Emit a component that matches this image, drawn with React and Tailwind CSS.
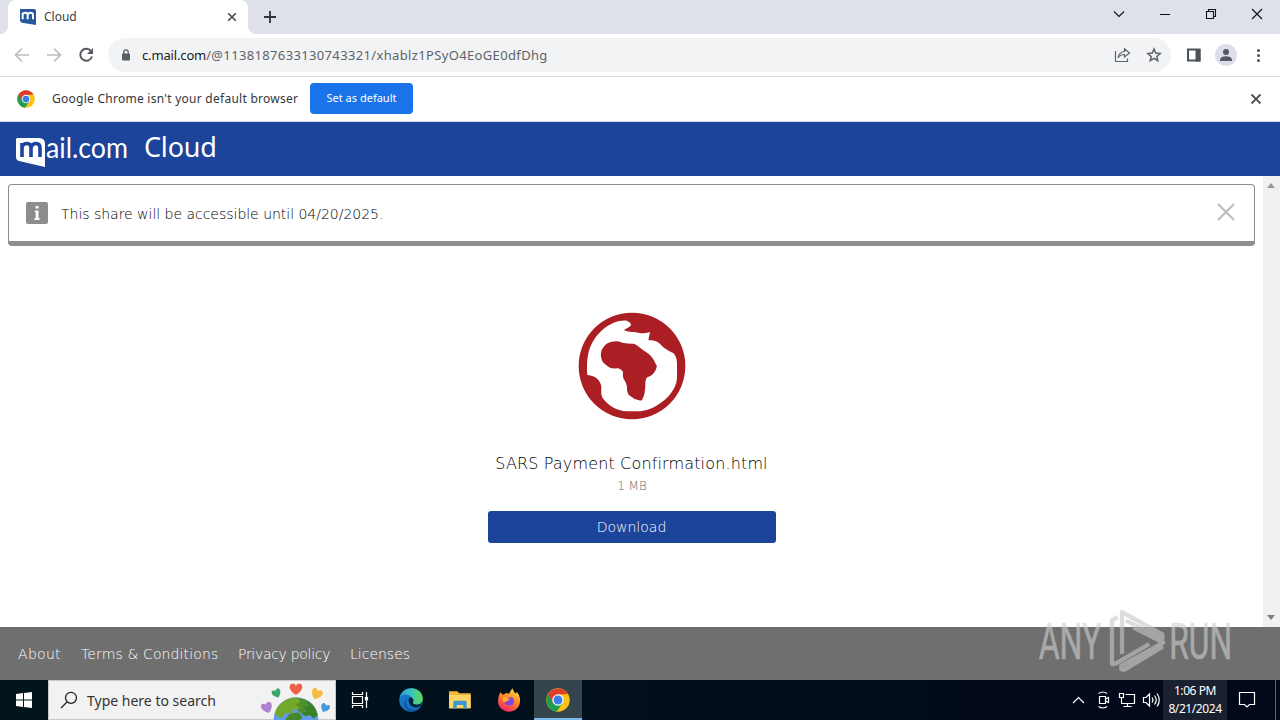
import React from "react";

const ui = "font-['Noto_Sans','Open_Sans',sans-serif]";
const verdana = "font-['DejaVu_Sans',sans-serif] font-extralight";

function ChromeLogo({ className }) {
  return (
    <svg viewBox="0 0 48 48" className={className}>
      <circle cx="24" cy="24" r="23.500" fill="#fbc116" />
      <path d="M24 24 L4 12 A23.500 23.500 0 0 0 21 47.300 L34 29Z" fill="#1e9d4b" />
      <path d="M4 12 A23.500 23.500 0 0 1 44 12 L24 13 L14 29.800Z" fill="#e13b2e" />
      <circle cx="24" cy="24" r="11.500" fill="#fff" />
      <circle cx="24" cy="24" r="9" fill="#3b7fea" />
    </svg>
  );
}

function TabStrip() {
  return (
    <div className="flex h-[34px] bg-[#dee1e9]">
      <div className="w-2 bg-white">
        <div className="h-full rounded-br-lg bg-[#dee1e9]" />
      </div>
      <div className="flex h-[34px] w-[240px] items-center rounded-t-lg bg-white pl-3">
        <svg viewBox="0 0 48 48" className="h-4 w-4 shrink-0">
          <path d="M0 0H42Q48 0 48 6V48L6 41Q0 40 0 34Z" fill="#28589c" />
          <path d="M8 31V11M8 16Q9 11 16 11Q23 11 23 18V31M23 18Q24 11 31 11Q39 11 39 18V31" stroke="#fff" strokeWidth="6" fill="none" />
        </svg>
        <span className={`${ui} ml-2 text-[12px] leading-4 text-[#3c4043]`}>Cloud</span>
        <svg viewBox="0 0 10 10" className="mr-[11px] ml-auto h-[10px] w-[10px]">
          <path d="M1.200 1.200 8.800 8.800M8.800 1.200 1.200 8.800" stroke="#45494d" strokeWidth="1.600" />
        </svg>
      </div>
      <div className="w-2 bg-white">
        <div className="h-full rounded-bl-lg bg-[#dee1e9]" />
      </div>
      <svg viewBox="0 0 14 14" className="mt-[10px] ml-[7px] h-[14px] w-[14px]">
        <path d="M7 1V13M1 7H13" stroke="#303338" strokeWidth="1.800" />
      </svg>
      <svg viewBox="0 0 180 34" className="ml-auto h-[34px] w-[180px]" fill="none" stroke="#111">
        <path d="M14 11.500 19 16.500 24 11.500" strokeWidth="1.100" />
        <path d="M60 14.500H70" strokeWidth="1" />
        <path d="M106.500 11.500H113.500V18.500H106.500ZM108.500 11.500V9.500H115.500V16.500H113.500" strokeWidth="1.100" />
        <path d="M152 9 162 19M162 9 152 19" strokeWidth="1.200" />
      </svg>
    </div>
  );
}

function Toolbar() {
  return (
    <div className="flex h-[43px] items-center border-b border-[#d9dbde] bg-white">
      <svg viewBox="0 0 108 42" className="h-[42px] w-[108px] shrink-0" fill="none">
        <path d="M29 21H16M22 14.500 15.500 21 22 27.500" stroke="#bbbdc0" strokeWidth="1.700" />
        <path d="M47 21H60M54 14.500 60.500 21 54 27.500" stroke="#bbbdc0" strokeWidth="1.700" />
        <path d="M91 17A6 6 0 1 0 92 22.500" stroke="#55595e" strokeWidth="1.900" />
        <path d="M93 14V20H87Z" fill="#55595e" />
      </svg>
      <div className="flex h-[34px] w-[1063px] items-center rounded-full bg-[#f1f3f5]">
        <svg viewBox="0 0 10 12" className="ml-[13px] h-[12px] w-[10px]">
          <rect x="1" y="4.500" width="8" height="7" rx="1" fill="#5a5e63" />
          <path d="M2.800 5V3A2.200 2.200 0 0 1 7.200 3V5" stroke="#5a5e63" strokeWidth="1.300" fill="none" />
        </svg>
        <span className={`${ui} ml-[11px] text-[13px] leading-5 tracking-[0.245px] whitespace-nowrap text-[#5f6368]`}>
          <span className="tracking-[-0.15px] text-[#202124]">c.mail.com</span>
          <span className="tracking-[0.35px]">/@1138187633130743321/xhablz1PSyO4EoGE0dfDhg</span>
        </span>
        <svg viewBox="0 0 60 34" className="ml-auto h-[34px] w-[60px]" fill="none" stroke="#5f6368">
          <path d="M4.500 13V23.500H16.500V20.500" strokeWidth="1.200" />
          <path d="M7 20Q8 14 13.500 13.500V10.800L18.500 15 13.500 19V16.500Q9 16.500 7 20Z" strokeWidth="1.200" />
          <path d="M43 11 44.700 15.100 49.100 15.500 45.800 18.400 46.800 22.700 43 20.400 39.200 22.700 40.200 18.400 36.900 15.500 41.300 15.100Z" strokeWidth="1.500" />
        </svg>
      </div>
      <svg viewBox="0 0 109 42" className="h-[42px] w-[109px] shrink-0">
        <path d="M17 15.500H28.500V26.500H17Z" fill="none" stroke="#4d5257" strokeWidth="2" />
        <rect x="24.500" y="15" width="5" height="12.500" fill="#4d5257" />
        <circle cx="55" cy="21" r="11" fill="#dcdfea" />
        <circle cx="55" cy="18" r="3" fill="#525868" />
        <path d="M49 27V25.500Q50 22.300 55 22.300T61 25.500V27Z" fill="#525868" />
        <g fill="#4d5257">
          <circle cx="87.500" cy="16.500" r="1.500" />
          <circle cx="87.500" cy="21.500" r="1.500" />
          <circle cx="87.500" cy="26.500" r="1.500" />
        </g>
      </svg>
    </div>
  );
}

function InfoBar() {
  return (
    <div className="flex h-[45px] items-center border-b border-[#d5d8e0] bg-white pl-[17px]">
      <ChromeLogo className="h-[18px] w-[18px]" />
      <span className={`${ui} ml-[17px] w-[258px] text-[12px] tracking-[0.26px] whitespace-nowrap text-[#33363a]`}>
        Google Chrome isn't your default browser
      </span>
      <button className={`${ui} mb-[2px] h-[31px] w-[103px] rounded bg-[#1a73e8] text-[11px] text-white`}>Set as default</button>
      <svg viewBox="0 0 12 12" className="mr-[18px] ml-auto h-3 w-3">
        <path d="M1.500 1.500 10.500 10.500M10.500 1.500 1.500 10.500" stroke="#4d5156" strokeWidth="1.800" />
      </svg>
    </div>
  );
}

function SiteHeader() {
  return (
    <header className="flex h-[54px] bg-[#1c449b] pl-4">
      <svg viewBox="0 0 114 54" className="h-[54px] w-[114px] shrink-0 overflow-visible">
        <path d="M0 17Q0 16 2 16H23Q29 16 29 22V45L3 39Q0 38 0 35Z" fill="#fff" />
        <path d="M6 35V21M6 25Q7 21.500 11 21.500Q15 21.500 15 26V35M15 26Q16 21.500 20 21.500Q24 21.500 24 26V35" stroke="#1c449b" strokeWidth="3.600" fill="none" />
        <text x="30" y="36" textLength="82" lengthAdjust="spacingAndGlyphs" fontFamily="Lato, sans-serif" fontSize="28" fill="#fff">ail.com</text>
      </svg>
      <h1 className={`${ui} ml-[14px] text-[27px] leading-[50px] tracking-[-0.2px] text-white`}>Cloud</h1>
    </header>
  );
}

function Globe() {
  return (
    <svg viewBox="0 0 375 375" className="ml-[2px] h-[125px] w-[125px]">
      <circle cx="186" cy="183" r="160" fill="#ab1e23" />
      <path fill="#fff" d="M52 210C48 150 58 112 96 76C123 53 147 45 170 47Q184 52 183 61C178 68 170 70 162 75C180 84 192 79 208 84Q222 87 240 81L235 106C253 105 264 109 276 123C290 137 303 139 312 146Q322 158 321 182V218C320 240 309 261 288 281C274 293 263 300 247 309Q229 317 211 319H170C139 317 117 303 100 282C92 270 94 264 94 246C92 226 77 212 52 210Z" />
      <path fill="#ab1e23" d="M93 155C90 135 104 113 126 110Q143 107 157 113Q177 117 192 116C208 123 213 133 227 140Q247 152 257 176Q263 182 259 190C254 205 244 213 232 217Q226 222 226 236Q226 266 218 281Q216 289 207 286Q191 283 181 273Q173 270 171 254Q172 236 161 222Q157 213 159 202Q154 191 141 190Q119 193 106 178Q95 170 93 155Z" />
    </svg>
  );
}

function Share() {
  return (
    <div className="flex h-[451px] bg-white">
      <main className={`${verdana} flex w-[1263px] flex-col items-center px-2 pt-2`}>
        <div className="flex h-[61.500px] w-[1247px] items-center rounded-[4px] border border-b-[5px] border-[#8e8e8e] pl-[17px]">
          <svg viewBox="0 0 22 22" className="h-[22px] w-[22px]">
            <rect width="22" height="22" rx="2" fill="#8d8d8d" />
            <path d="M9.500 4H12.500V6.500H9.500ZM9 8.500H12.500V16H13.500V18H8.500V16H9.700V10.500H9Z" fill="#fff" />
          </svg>
          <p className="mt-[3px] ml-[13px] text-[14px] tracking-[-0.02px] text-black">This share will be accessible until 04/20/2025.</p>
          <svg viewBox="0 0 18 18" className="mr-[19px] mb-[2px] ml-auto h-[18px] w-[18px]">
            <path d="M1 1 17 17M17 1 1 17" stroke="#bdbdbd" strokeWidth="2.200" />
          </svg>
        </div>
        <div className="mt-[59.500px] flex flex-col items-center">
          <Globe />
          <h2 className="mt-[23px] text-[16px] leading-[22px] tracking-[0.15px] whitespace-nowrap text-black">SARS Payment Confirmation.html</h2>
          <p className="mt-[2px] ml-px text-[12px] leading-[18px] text-[#666]">1 MB</p>
          <button className="mt-4 h-8 w-[288px] rounded-[3px] bg-[#1c449b] text-[14px] text-white">Download</button>
        </div>
      </main>
      <div className="flex w-[17px] flex-col items-center justify-between bg-[#f1f1f1] py-[7px] pr-px">
        <svg viewBox="0 0 8 5" className="h-[5px] w-2"><path d="M0 5 4 0 8 5Z" fill="#979797" /></svg>
        <svg viewBox="0 0 8 5" className="h-[5px] w-2"><path d="M0 0 4 5 8 0Z" fill="#808080" /></svg>
      </div>
    </div>
  );
}

function SiteFooter() {
  return (
    <footer className={`${verdana} flex h-[53px] items-center bg-[#6f6f6f] pt-[2px] pl-[18px] text-[14px] whitespace-nowrap text-white`}>
      <a className="w-[63px] tracking-[0.3px]">About</a>
      <a className="w-[157px] tracking-[0.12px]">Terms &amp; Conditions</a>
      <a className="w-[112px] tracking-[-0.3px]">Privacy policy</a>
      <a>Licenses</a>
    </footer>
  );
}

function Watermark() {
  return (
    <svg viewBox="0 0 780 390" className="absolute top-[590px] left-[1020px] h-[130px] w-[260px] opacity-60">
      <g fill="#d0d0d0" stroke="#d0d0d0" strokeWidth="2" fontFamily="Roboto, sans-serif" fontSize="150">
        <text x="56" y="208" textLength="188" lengthAdjust="spacingAndGlyphs">ANY</text>
        <text x="448" y="208" textLength="188" lengthAdjust="spacingAndGlyphs">RUN</text>
      </g>
      <g fill="none" stroke="#c8c8c8" strokeWidth="13" strokeLinejoin="round">
        <path d="M306 192V66L427 133V145L318 92" />
        <path d="M293 82L276 90V222L288 220L388 162" />
        <path d="M340 112L430 158L304 228V238L314 239L429 169" />
      </g>
    </svg>
  );
}

function SearchArt() {
  const heart = "M0 8C-12 0-8-9-3-7Q-1-7 0-4Q1-7 3-7C8-9 12 0 0 8Z";
  return (
    <svg viewBox="0 0 225 117" className="ml-auto h-[39px] w-[75px]">
      <circle cx="108" cy="116" r="67" fill="#609ce9" />
      <path d="M63 67Q84 48 114 50L128 61L114 72L125 81L96 87L100 96L76 96L66 112L46 103Q44 84 63 67Z" fill="#74a82b" />
      <path d="M132 55Q166 67 173 101L161 113L150 103L134 105L123 96L139 91L128 80L146 72Z" fill="#398126" />
      <path d="M110 50L134 55L146 72L128 80L139 91L123 96L110 88L120 80L108 72L122 60Z" fill="#4f9128" />
      <path d="M88 99L115 94L128 108L120 117H75Z" fill="#45872d" />
      <g>
        <path d={heart} transform="translate(108 24) scale(2.400 2.200)" fill="#ee614a" />
        <path d={heart} transform="translate(50 37) rotate(-25) scale(1.700)" fill="#39a567" />
        <path d={heart} transform="translate(170 39) rotate(25) scale(2.100)" fill="#f5bd3d" />
        <path d={heart} transform="translate(21 80) rotate(-20) scale(2.100)" fill="#ac82d0" />
        <path d={heart} transform="translate(195 81) rotate(25) scale(1.700)" fill="#439bdd" />
      </g>
    </svg>
  );
}

function Taskbar() {
  return (
    <div className="flex h-10 bg-[linear-gradient(90deg,#02151c,#020d1c_60%,#02071a)]">
      <div className="flex w-12 items-center justify-center">
        <svg viewBox="0 0 16 16" className="h-4 w-4" fill="#fff">
          <path d="M0 2 7 1V7.500H0ZM8 .9 16 0V7.500H8ZM0 8.500H7V15L0 14ZM8 8.500H16V16L8 15.100Z" />
        </svg>
      </div>
      <div className="flex w-[288px] items-center border border-[#c8c8c8] bg-[#f2f2f2] pl-[11px]">
        <svg viewBox="0 0 18 18" className="h-[18px] w-[18px]" fill="none" stroke="#222" strokeWidth="1.300">
          <circle cx="11" cy="6.800" r="5.500" />
          <path d="M7 11 1 17" />
        </svg>
        <span className={`${ui} ml-[9px] text-[14px] whitespace-nowrap text-[#333]`}>Type here to search</span>
        <SearchArt />
      </div>
      <div className="flex w-12 items-center justify-center">
        <svg viewBox="0 0 18 18" className="h-[18px] w-[18px]" fill="none" stroke="#fff" strokeWidth="1.200">
          <path d="M1.500 1V3.500H11.500V1M1.500 17V14.500H11.500V17M1.500 5.500H11.500V12.500H1.500ZM15.500 1V6M15.500 10V17" />
          <rect x="14.500" y="6.500" width="2" height="2.500" fill="#fff" />
        </svg>
      </div>
      <div className="flex w-[54px] items-center justify-center">
        <svg viewBox="0 0 48 48" className="h-6 w-6">
          <defs>
            <linearGradient id="edgeTop" x1="0" x2="1"><stop stopColor="#279de0" /><stop offset=".55" stopColor="#39c7b5" /><stop offset="1" stopColor="#63d84c" /></linearGradient>
          </defs>
          <circle cx="24" cy="24" r="23.500" fill="#1677c7" />
          <path d="M1 21C4 6 15 .5 25 .5C39 .5 48 11 47.500 22C47 30 40 34 33 33C27 32 28 30 29 26C29 19 21 13 14 13C8 13 3 16 1 21Z" fill="url(#edgeTop)" />
          <path d="M17 20C10 29 17 43 31 43Q37 43 43 38C37 48 22 50 15 43C7 36 9 24 17 20Z" fill="#1257a3" />
          <path d="M21 19Q28 18 29 25C27 28 27 32 33 33Q39 35 45 30C46 34 42 39 34 39C22 39 16 27 21 19Z" fill="#07233a" />
        </svg>
      </div>
      <div className="flex w-11 items-center justify-center">
        <svg viewBox="0 0 66 54" className="h-[18px] w-[22px]">
          <path d="M0 1H25L31 7H65V52H0Z" fill="#f0b73b" />
          <path d="M0 12H65V52H0Z" fill="#fbd565" />
          <path d="M13 53V34Q13 29 18 29H48Q53 29 53 34V53H43V42H23V53Z" fill="#3c96d3" />
        </svg>
      </div>
      <div className="flex w-[52px] items-center justify-center pl-[2px]">
        <svg viewBox="0 0 70 72" className="h-6 w-6">
          <defs>
            <linearGradient id="fox" x1=".8" y1="0" x2=".3" y2="1"><stop stopColor="#ffe34a" /><stop offset=".45" stopColor="#ff8b27" /><stop offset="1" stopColor="#ee2464" /></linearGradient>
          </defs>
          <path d="M9 13L17 20L27 15L35 17L45 1Q49 13 56 17L58 11Q70 25 68 42C66 60 52 71 35 71C16 71 2 57 2 39Q2 24 9 13Z" fill="url(#fox)" />
          <path d="M24 29H35Q48 24 50 37C51 48 44 54 35 53Q24 52 21 42L33 38Z" fill="#8548d5" />
          <path d="M14 29L24 27L38 34L28 40L19 43Z" fill="#ffad24" />
        </svg>
      </div>
      <div className="flex w-12 items-center justify-center border-b-2 border-[#76b9ed] bg-[#34454d] pt-[2px]">
        <ChromeLogo className="h-6 w-6" />
      </div>
      <svg viewBox="0 0 96 40" className="ml-auto h-10 w-24" fill="none" stroke="#fff" strokeWidth="1.200">
        <path d="M6 23 11.500 17.500 17 23" />
        <path d="M32.500 16.500H38.500V23.500H32.500ZM38.500 19 41.500 17.500V22.500L38.500 21M31.500 13.500Q36 10.500 40 13.500M31.500 26.500Q36 29.500 40 26.500" />
        <path d="M58.500 14.500H67.500V23.500H54.500V18M60.500 23.500V26.500M56.500 26.500H64.500M52.500 13.500H56.500V17.500H52.500Z" />
        <path d="M76.500 17.500H79L82.500 14V26L79 22.500H76.500ZM85 17.500Q87 20 85 22.500M87.500 15.500Q91 20 87.500 24.500M90 13.500Q94.500 20 90 26.500" />
      </svg>
      <div className={`${ui} flex w-[64px] flex-col items-center justify-center bg-[#192130] text-[12px] leading-[18px] tracking-[-0.42px] text-white`}>
        <span>1:06 PM</span>
        <span>8/21/2024</span>
      </div>
      <svg viewBox="0 0 53 40" className="h-10 w-[53px]" fill="none" stroke="#fff" strokeWidth="1.200">
        <path d="M12.500 12.500H27.500V24.500H22.500L20 27 17.500 24.500H12.500Z" />
        <path d="M48.500 0V40" stroke="#5b6272" strokeWidth="1" />
      </svg>
    </div>
  );
}

export default function App() {
  return (
    <div className="relative h-[720px] w-[1280px] overflow-hidden bg-white">
      <TabStrip />
      <Toolbar />
      <InfoBar />
      <SiteHeader />
      <Share />
      <SiteFooter />
      <Taskbar />
      <Watermark />
    </div>
  );
}
